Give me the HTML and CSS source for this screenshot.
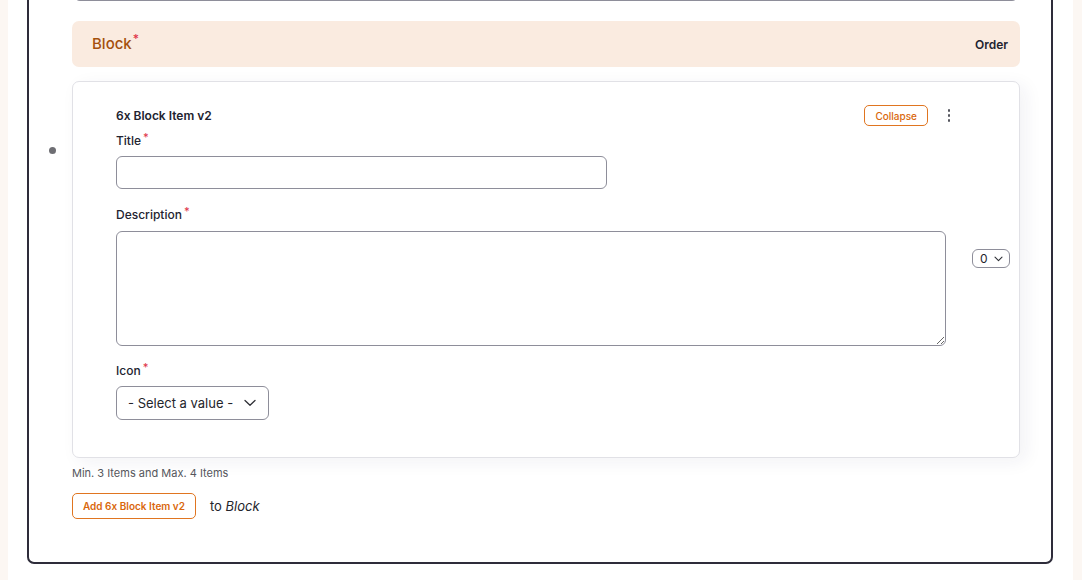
FILE: index.html
```html
<!DOCTYPE html>
<html>
<head>
<meta charset="utf-8">
<link rel="stylesheet" href="styles.css">
</head>
<body>
<div class="page">
  <div class="frame">
    <div class="prev"></div>
    <div class="block-head">
      <span class="block-title">Block<span class="req">*</span></span>
      <span class="order">Order</span>
    </div>
    <div class="row">
      <div class="handle"><span class="dot"></span></div>
      <div class="card">
        <div class="card-main">
          <div class="card-top">
            <span class="item-name">6x Block Item v2</span>
            <div class="actions">
              <button class="btn-outline small">Collapse</button>
              <span class="kebab"><i></i><i></i><i></i></span>
            </div>
          </div>
          <div class="field">
            <label class="lbl">Title<span class="req">*</span></label>
            <input class="input" type="text">
          </div>
          <div class="field">
            <label class="lbl">Description<span class="req">*</span></label>
            <textarea class="textarea"></textarea>
          </div>
          <div class="field">
            <label class="lbl">Icon<span class="req">*</span></label>
            <div class="select">
              <span>- Select a value -</span>
              <svg width="12" height="8" viewBox="0 0 12 8"><path d="M1 1.5 L6 6.2 L11 1.5" fill="none" stroke="#2f3036" stroke-width="1.3" stroke-linecap="round" stroke-linejoin="round"/></svg>
            </div>
          </div>
        </div>
        <div class="weight">
          <div class="wsel">
            <span>0</span>
            <svg width="9" height="6" viewBox="0 0 9 6"><path d="M1 1.2 L4.5 4.6 L8 1.2" fill="none" stroke="#2f3036" stroke-width="1.1" stroke-linecap="round" stroke-linejoin="round"/></svg>
          </div>
        </div>
      </div>
    </div>
    <p class="hint">Min. 3 Items and Max. 4 Items</p>
    <div class="add-row">
      <button class="btn-outline add">Add 6x Block Item v2</button>
      <span class="to">to <em>Block</em></span>
    </div>
  </div>
</div>
</body>
</html>
```

FILE: styles.css
```css
html, body {
  margin: 0;
  padding: 0;
}
body {
  background: #fcf7f3;
  font-family: Inter, "Noto Sans", sans-serif;
  color: #222330;
  overflow: hidden;
  height: 580px;
}
.page {
  display: flow-root;
  margin: 0 9px 0 8px;
  background: #fff;
  height: 580px;
  padding: 0 20px 0 19px;
  box-sizing: border-box;
}
.frame {
  margin-top: -60px;
  border: 2px solid #2e2c3a;
  border-radius: 7px;
  padding: 0 31px 43px 43px;
  background: #fff;
}
.prev {
  height: 60px;
  box-sizing: border-box;
  border: 1px solid #8e8e9a;
  border-top: none;
  border-radius: 0 0 6px 6px;
  margin: -1px 2px 0;
}
.block-head {
  margin-top: 20px;
  height: 46px;
  background: #faebe0;
  border-radius: 7px;
  display: flex;
  align-items: center;
  justify-content: space-between;
  padding: 0 12px 0 20px;
}
.block-title {
  font-size: 15px;
  font-weight: 500;
  color: #a4500d;
  position: relative;
  top: -1px;
}
.block-title .req {
  font-size: 12px;
  top: -6px;
  left: 1px;
}
.req {
  color: #e0364a;
  position: relative;
  top: -4px;
  left: 2px;
  font-size: 11px;
}
.order {
  font-size: 12px;
  font-weight: 600;
}
.row {
  display: flex;
  margin-top: 14px;
}
.handle {
  flex: 0 0 43px;
  margin-left: -43px;
  display: flex;
  justify-content: center;
  padding-top: 66px;
  padding-left: 3px;
  box-sizing: border-box;
}
.dot {
  width: 7px;
  height: 7px;
  border-radius: 50%;
  background: #6e6e73;
}
.card {
  flex: 1;
  min-width: 0;
  display: flex;
  border: 1px solid #e1e1e6;
  border-radius: 7px;
  box-shadow: 6px 4px 18px rgba(40, 40, 90, 0.06);
  background: #fff;
}
.card-main {
  flex: 1;
  min-width: 0;
  padding: 23px 13px 37px 43px;
}
.card-top {
  display: flex;
  justify-content: space-between;
  align-items: center;
  height: 21px;
  margin-right: -10px;
}
.item-name {
  font-size: 12px;
  font-weight: 600;
}
.actions {
  display: flex;
  align-items: center;
  gap: 13px;
}
.btn-outline {
  font-family: Inter, "Noto Sans", sans-serif;
  background: #fff;
  border: 1px solid #e07520;
  color: #d9670c;
  border-radius: 5px;
  cursor: pointer;
}
.small {
  height: 21px;
  padding: 0 10px;
  font-size: 10px;
  font-weight: 500;
}
.kebab {
  display: flex;
  flex-direction: column;
  align-items: center;
  gap: 2.5px;
  width: 14px;
  padding-left: 1px;
}
.kebab i {
  width: 2.5px;
  height: 2.5px;
  border-radius: 50%;
  background: #55565e;
}
.field {
  display: flex;
  flex-direction: column;
  align-items: flex-start;
}
.lbl {
  font-size: 12px;
  font-weight: 500;
  line-height: 16px;
  margin-top: 7px;
  margin-bottom: 7px;
}
.field + .field .lbl {
  margin-top: 18px;
  margin-bottom: 8px;
}
.field:last-child .lbl {
  margin-top: 17px;
  margin-bottom: 7px;
}
.input {
  width: 491px;
  height: 33px;
  box-sizing: border-box;
  border: 1px solid #8e8e9a;
  border-radius: 6px;
  font-family: inherit;
  margin: 0;
}
.textarea {
  width: 830px;
  height: 115px;
  box-sizing: border-box;
  border: 1px solid #8e8e9a;
  border-radius: 6px;
  margin: 0;
  font-family: inherit;
  display: block;
}
.select {
  width: 153px;
  height: 34px;
  box-sizing: border-box;
  border: 1px solid #8e8e9a;
  border-radius: 6px;
  display: flex;
  align-items: center;
  justify-content: space-between;
  padding: 0 12px 0 11px;
  font-size: 13px;
  color: #24252b;
}
.weight {
  flex: 0 0 60px;
  padding: 167px 0 0 13px;
  box-sizing: border-box;
}
.wsel {
  width: 38px;
  height: 19px;
  box-sizing: border-box;
  border: 1px solid #8e8e9a;
  border-radius: 6px;
  display: flex;
  align-items: center;
  padding: 0 0 0 7px;
  gap: 6px;
  font-size: 12px;
  color: #24252b;
}
.hint {
  margin: 8px 0 0;
  font-size: 11px;
  color: #55565c;
  line-height: 14px;
}
.add-row {
  display: flex;
  align-items: center;
  gap: 14px;
  margin-top: 13px;
}
.add {
  height: 26px;
  padding: 0 10px;
  font-size: 10px;
  font-weight: 600;
}
.to {
  font-size: 13px;
  color: #24252b;
}
.to em {
  font-style: italic;
}
```
